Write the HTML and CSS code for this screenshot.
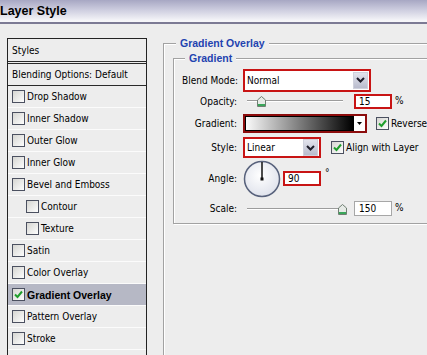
FILE: index.html
```html
<!DOCTYPE html>
<html>
<head>
    <meta charset="UTF-8">
    <title>Layer Style</title>
    <link rel="stylesheet" href="styles.css">
</head>
<body>
    <div class="titlebar">
        <h1>Layer Style</h1>
    </div>
    <div class="dialog">
        <!--左侧样式列表-->
        <ul class="styles">
            <li class="head">Styles</li>
            <li class="blend">Blending Options: Default</li>
            <li><span class="cb"></span>Drop Shadow</li>
            <li><span class="cb"></span>Inner Shadow</li>
            <li><span class="cb"></span>Outer Glow</li>
            <li><span class="cb"></span>Inner Glow</li>
            <li><span class="cb"></span>Bevel and Emboss</li>
            <li class="sub"><span class="cb"></span>Contour</li>
            <li class="sub"><span class="cb"></span>Texture</li>
            <li><span class="cb"></span>Satin</li>
            <li><span class="cb"></span>Color Overlay</li>
            <li class="on"><span class="cb"><svg width="11" height="11" viewBox="0 0 11 11"><path d="M2 5.5l2.5 2.5L9 2.5" fill="none" stroke="#1f9e2c" stroke-width="2"/></svg></span>Gradient Overlay</li>
            <li><span class="cb"></span>Pattern Overlay</li>
            <li><span class="cb"></span>Stroke</li>
        </ul>

        <!--右侧设置-->
        <fieldset class="group outer">
            <legend>Gradient Overlay</legend>
            <fieldset class="group inner">
                <legend>Gradient</legend>

                <div class="row r-blend">
                    <label>Blend Mode:</label>
                    <div class="select mode">
                        <span class="val">Normal</span>
                        <span class="drop"><svg width="9" height="6" viewBox="0 0 9 6"><path d="M1 1l3.5 3.5L8 1" fill="none" stroke="#1e1e2a" stroke-width="2"/></svg></span>
                    </div>
                </div>

                <div class="row r-opacity">
                    <label>Opacity:</label>
                    <div class="slider">
                        <span class="track"></span>
                        <span class="thumb" style="left:14px"><svg width="9" height="11" viewBox="0 0 9 11"><path d="M.5 4L4.5.5 8.5 4v6.5H.5z" fill="#e6eae6" stroke="#6f7f72"/><rect x="1" y="8" width="7" height="2" fill="#3aa65a"/></svg></span>
                    </div>
                    <div class="num red">15</div>
                    <span class="unit">%</span>
                </div>

                <div class="row r-gradient">
                    <label>Gradient:</label>
                    <div class="gradbox">
                        <span class="ramp"></span>
                        <span class="arrow"><svg width="5" height="3" viewBox="0 0 5 3"><path d="M0 0h5L2.5 3z" fill="#000"/></svg></span>
                    </div>
                    <span class="check reverse"><span class="cb"><svg width="11" height="11" viewBox="0 0 11 11"><path d="M2 5.5l2.5 2.5L9 2.5" fill="none" stroke="#1f9e2c" stroke-width="2"/></svg></span>Reverse</span>
                </div>

                <div class="row r-style">
                    <label>Style:</label>
                    <div class="select kind">
                        <span class="val">Linear</span>
                        <span class="drop"><svg width="9" height="6" viewBox="0 0 9 6"><path d="M1 1l3.5 3.5L8 1" fill="none" stroke="#1e1e2a" stroke-width="2"/></svg></span>
                    </div>
                    <span class="check align"><span class="cb"><svg width="11" height="11" viewBox="0 0 11 11"><path d="M2 5.5l2.5 2.5L9 2.5" fill="none" stroke="#1f9e2c" stroke-width="2"/></svg></span>Align with Layer</span>
                </div>

                <div class="row r-angle">
                    <label>Angle:</label>
                    <span class="dial"><svg width="38" height="38" viewBox="0 0 38 38">
                        <defs><radialGradient id="dg" cx="0.45" cy="0.4" r="0.6"><stop offset="0" stop-color="#fff"/><stop offset="1" stop-color="#e0e3ec"/></radialGradient></defs>
                        <circle cx="19" cy="19" r="17.5" fill="url(#dg)" stroke="#58627c" stroke-width="1.5"/>
                        <path d="M19 2v17" stroke="#111" stroke-width="1.5"/>
                        <rect x="17.5" y="17.5" width="3" height="3" fill="#111"/>
                    </svg></span>
                    <div class="num red">90</div>
                    <span class="deg">°</span>
                </div>

                <div class="row r-scale">
                    <label>Scale:</label>
                    <div class="slider">
                        <span class="track"></span>
                        <span class="thumb" style="left:95px"><svg width="9" height="11" viewBox="0 0 9 11"><path d="M.5 4L4.5.5 8.5 4v6.5H.5z" fill="#e6eae6" stroke="#6f7f72"/><rect x="1" y="8" width="7" height="2" fill="#3aa65a"/></svg></span>
                    </div>
                    <div class="num">150</div>
                    <span class="unit">%</span>
                </div>
            </fieldset>
        </fieldset>
    </div>
</body>
</html>
```

FILE: styles.css
```css
* {
    margin: 0;
    padding: 0;
    box-sizing: border-box;
}
html, body {
    width: 427px;
    height: 355px;
    overflow: hidden;
}
body {
    font-family: "DejaVu Sans Condensed", "Liberation Sans", Arial, sans-serif;
    font-size: 10px;
    color: #000;
    background-color: #ededed;
}

/* 标题栏 */
.titlebar {
    height: 24px;
    border-bottom: 2px solid #7c7a94;
    background: linear-gradient(#a7a7c3, #cdcddf 45%, #f6f6f9 95%);
}
.titlebar h1 {
    font-family: "Liberation Sans", Arial, sans-serif;
    font-size: 12.5px;
    font-weight: bold;
    line-height: 21px;
    padding-top: 1px;
}

.dialog {
    display: flex;
    align-items: flex-start;
    padding: 12px 0 0 7px;
}

/* 样式列表 */
.styles {
    flex: none;
    width: 140px;
    height: 330px;
    margin-top: 2px;
    border: 1px solid #232323;
    border-bottom: none;
    list-style: none;
}
.styles li {
    display: flex;
    align-items: center;
    height: 22px;
    padding-left: 4px;
    border-bottom: 1px solid #fbfbfb;
    white-space: nowrap;
}
.styles li.head {
    height: 25px;
    border-bottom: 3px double #2a2a2a;
}
.styles li.blend {
    border-bottom: 1px solid #2a2a2a;
}
.styles li.sub {
    padding-left: 18px;
}
.styles li.on {
    background-color: #b6b8c5;
    font-family: "Liberation Sans", Arial, sans-serif;
    font-size: 10.5px;
    font-weight: bold;
}
.cb {
    flex: none;
    display: flex;
    width: 13px;
    height: 13px;
    margin-right: 2px;
    border: 1px solid #4b5060;
    background: linear-gradient(135deg, #d6d6d2, #fdfdfd);
}

/* 分组框 */
.group {
    border: 1px solid #a2a2a2;
    box-shadow: inset 1px 1px 0 #fff, 1px 1px 0 #fff;
}
.group legend {
    margin-left: 3px;
    padding: 0 4px;
    font-family: "Liberation Sans", Arial, sans-serif;
    font-size: 10.5px;
    font-weight: bold;
    line-height: 14px;
    color: #1f43b0;
    background-color: #ededed;
}
.outer {
    flex: none;
    width: 300px;
    height: 400px;
    margin-left: 16px;
    padding: 1px 0 0 9px;
}
.inner {
    width: 290px;
    padding: 3px 0 5px 8px;
}

.row {
    display: flex;
    align-items: center;
}
.row label {
    flex: none;
    width: 55px;
    margin-right: 6px;
    text-align: right;
    white-space: nowrap;
}
.r-blend { height: 24px; }
.r-opacity { height: 18px; }
.r-gradient { height: 27px; }
.r-style { height: 21px; }
.r-angle { height: 41px; }
.r-scale { height: 19px; }

/* 下拉框 */
.select {
    flex: none;
    display: flex;
    align-items: center;
    padding: 0 1px 0 2px;
    border: 2px solid #c81414;
    background-color: #fff;
}
.select.mode {
    width: 128px;
    height: 23px;
}
.select.kind {
    width: 78px;
    height: 21px;
}
.select .drop {
    display: flex;
    align-items: center;
    justify-content: center;
    width: 15px;
    height: 17px;
    margin-left: auto;
    border: 1px solid #cfd1dc;
    background: linear-gradient(#e2e3ec, #b9bccd);
}

/* 滑块 */
.slider {
    flex: none;
    position: relative;
    display: flex;
    align-items: center;
    width: 104px;
    height: 12px;
    padding: 0 4px;
}
.slider .track {
    flex: 1;
    height: 2px;
    border-top: 1px solid #9c9c9c;
    border-bottom: 1px solid #fff;
}
.slider .thumb {
    position: absolute;
    top: 1px;
    display: flex;
}

.num {
    flex: none;
    width: 38px;
    height: 15px;
    margin-left: 7px;
    padding-left: 4px;
    line-height: 13px;
    border: 1px solid #a7a7a7;
    background-color: #fff;
}
.num.red {
    border: 2px solid #c81414;
    padding-left: 3px;
    line-height: 11px;
}
.unit {
    margin-left: 3px;
    margin-top: -2px;
}

/* 渐变条 */
.gradbox {
    flex: none;
    display: flex;
    width: 124px;
    height: 19px;
    border: 2px solid #8c0c0c;
    background-color: #fff;
}
.gradbox .ramp {
    flex: 1;
    border: 1px solid #000;
    background: linear-gradient(to right, #fafafa, #000);
}
.gradbox .arrow {
    display: flex;
    align-items: center;
    justify-content: center;
    width: 11px;
}

.check {
    display: flex;
    align-items: center;
    white-space: nowrap;
}
.check.reverse {
    margin-left: 9px;
}
.check.align {
    margin-left: 10px;
}

.dial {
    flex: none;
    display: flex;
}
.r-angle .num {
    margin-left: 2px;
}
.deg {
    align-self: flex-start;
    margin: 9px 0 0 4px;
}
```
